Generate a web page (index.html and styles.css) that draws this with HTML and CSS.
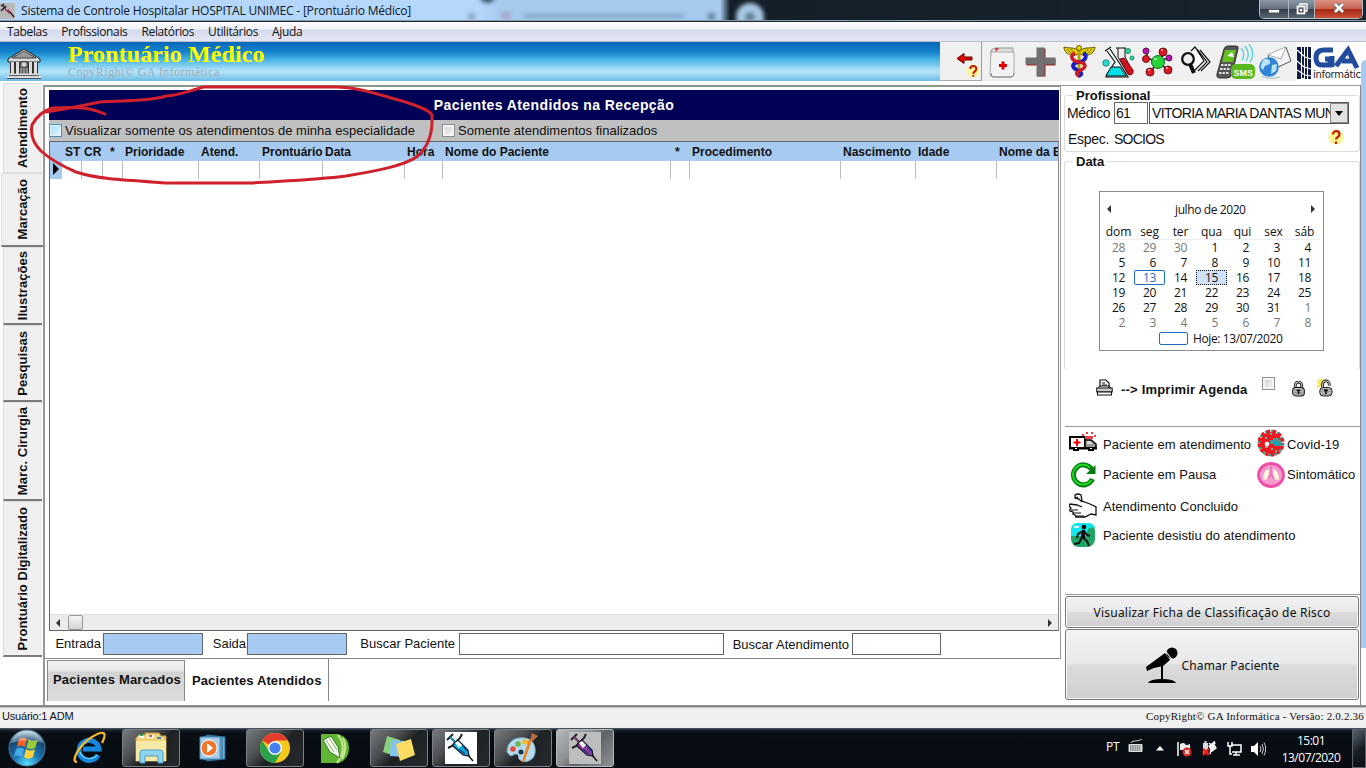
FILE: index.html
```
<!DOCTYPE html>
<html lang="pt-BR">
<head>
<meta charset="utf-8">
<title>Prontuário Médico</title>
<link rel="stylesheet" href="styles.css">
</head>
<body>
<svg width="0" height="0" class="defs" aria-hidden="true">
  <defs>
    <symbol id="syringe" viewBox="0 0 32 32">
      <path d="M2 8l6-6M5 5l7 7M3 16l4-2 8-8 2-4" stroke="#222" stroke-width="2" fill="none"/>
      <path d="M5 5l6 6" stroke="currentColor" stroke-width="1.500"/>
      <path d="M9 11l4-3 10 10 1 6-6-1L8 14z" fill="currentColor" stroke="#15152c" stroke-width="1.200"/>
      <path d="M10 11l3-2 4 4-3 3z" fill="#fff"/>
      <path d="M14 17l6 5M18 14l4 5" stroke="#1c3a9a" stroke-width="1.300"/>
      <path d="M23 23l5 6" stroke="#111" stroke-width="1.400"/>
    </symbol>
    <symbol id="padlock" viewBox="0 0 14 17">
      <path d="M3.500 8V4.500a3.500 3.500 0 0 1 7 0V8" fill="none" stroke="#111" stroke-width="3"/>
      <path d="M3.500 8V4.500a3.500 3.500 0 0 1 7 0V8" fill="none" stroke="#ccc" stroke-width="1.200"/>
      <rect x=".7" y="7" width="12.600" height="9" rx="3.500" fill="#c4c4c4" stroke="#111" stroke-width="1.100"/>
      <path d="M2 9.500h10M2 12h10M2 14h10" stroke="#666" stroke-width=".7"/>
      <path d="M5 10h4M7 10v4" stroke="#000" stroke-width="1.500"/>
    </symbol>
  </defs>
</svg>
<div class="desktop">
  <header class="titlebar">
    <svg class="app-icon" width="15" height="16" viewBox="0 0 15 16"><rect width="15" height="16" fill="#b9b9b9"/><path d="M1 3l3-2M2 2l4 4M1 8l5-5M5 5l5 4 4 5" stroke="#301820" stroke-width="1.400" fill="none"/><path d="M5 5l5 5" stroke="#903060" stroke-width="2.500"/><path d="M6 5l2 2" stroke="#fff"/></svg>
    <span class="title-text">Sistema de Controle Hospitalar HOSPITAL UNIMEC - [Prontuário Médico]</span>
    <div class="glass"><i class="blur-tab"></i><i class="blur-x first"></i><i class="blur-fav"></i><i class="blur-text"></i><i class="blur-x"></i><i class="blur-plus"></i></div>
    <div class="window-buttons">
      <span class="wb min"><svg width="12" height="5" viewBox="0 0 12 5"><rect x=".5" y=".5" width="11" height="3.500" fill="#fff" stroke="#555"/></svg></span>
      <span class="wb max"><svg width="12" height="12" viewBox="0 0 12 12"><path d="M4 3V1h7v7H9" fill="none" stroke="#fff" stroke-width="1.400"/><rect x="1.500" y="3.500" width="7" height="7" fill="#667" stroke="#fff" stroke-width="1.700"/><rect x="4" y="6" width="2" height="2" fill="#fff"/></svg></span>
      <span class="wb close"><svg width="12" height="10" viewBox="0 0 12 10"><path d="M2 1l8 8M10 1L2 9" stroke="#555" stroke-width="4"/><path d="M2 1l8 8M10 1L2 9" stroke="#fff" stroke-width="2.600"/></svg></span>
    </div>
  </header>
  <nav class="menu"><span>Tabelas</span><span>Profissionais</span><span>Relatórios</span><span>Utilitários</span><span>Ajuda</span></nav>
  <div class="toolbar">
    <div class="banner">
      <svg class="temple" width="34" height="31" viewBox="0 0 34 31"><path d="M1 11L17 1l16 10v3H1z" fill="#d8d8d8" stroke="#222"/><path d="M5 10l12-7 12 7z" fill="#999" stroke="#444"/><rect x="3" y="14" width="28" height="13" fill="#333"/><path d="M5.500 14v12M10.500 14v12M23.500 14v12M28.500 14v12" stroke="#ddd" stroke-width="3"/><rect x="13" y="13" width="8" height="13" fill="#555"/><path d="M15 15h4v3h-4zM14 20v6M17 20v6M20 20v6" fill="#ddd" stroke="#ccc"/><path d="M2 26.500h30M0 29h34" stroke="#ddd" stroke-width="2"/><path d="M0 30.500h34M2 27.600h30" stroke="#333" stroke-width=".8"/></svg>
      <div class="brand"><h1>Prontuário Médico</h1><p>CopyRight© GA Informática</p></div>
    </div>
    <div class="exit"><svg width="34" height="34" viewBox="0 0 34 34"><path d="M11 15.500l7-5v3.500h8v3h-8v3.500z" fill="#e60000" stroke="#600" stroke-width="1"/><circle cx="27" cy="28" r="6.500" fill="#fff69c"/><path d="M24.300 26c0-4 6-4 6 0 0 2.500-3 2.300-3 5M27.300 32v1.800" fill="none" stroke="#c41a10" stroke-width="2"/></svg></div>
    <div class="tools">
      <svg width="26" height="32" viewBox="0 0 26 32"><path d="M2 4l4-2h18v8H2z" fill="#ddd" stroke="#999"/><path d="M2 6h23v22q0 3-3 3H4q-3 0-3-3z" fill="#f2f2f2" stroke="#aaa"/><path d="M2 27q0 4 3 4h17q3 0 3-4" fill="none" stroke="#888"/><path d="M6 2h4l-3 4z" fill="#d33"/><path d="M14 15.500v8M10 19.500h8" stroke="#e00000" stroke-width="3"/></svg>
      <svg width="32" height="32" viewBox="0 0 32 32"><path d="M12.500 2.500h8v10h10v7h-10v11h-8v-11h-11v-7h11z" fill="#a02020"/><path d="M11.500 1.500h8v10h11v7h-11v12h-8v-12h-11v-7h11z" fill="#707070"/></svg>
      <svg width="34" height="34" viewBox="0 0 34 34"><path d="M16 7C12 1 6 4 1 2c0 4 3 7 7 8 3 1 6 0 8-2 2 2 5 3 9 2 4-1 7-4 7-8-5 2-11-1-16 5z" fill="#e6d200" stroke="#665b00"/><path d="M4 4l5 5M8 4l4 5M29 4l-5 5M25 4l-4 5" stroke="#776b00"/><path d="M16 3v29" stroke="#b49e00" stroke-width="3"/><path d="M20 8c5 2 3 8-4 9s-8 5-2 8 5 5 1 6" fill="none" stroke="#1820c0" stroke-width="4"/><path d="M12 8c-6 3-3 8 4 9s8 5 2 8-5 4-2 6" fill="none" stroke="#d01820" stroke-width="3.500"/><circle cx="16" cy="3" r="2.500" fill="#eee000" stroke="#665b00"/></svg>
      <svg width="34" height="34" viewBox="0 0 34 34"><path d="M14 3h10M16 3v9l10 17q5 1 4-4L23 12V3" fill="#eee" stroke="#111"/><path d="M18 14l9 16q5 0 4-5l-9-12z" fill="#e00c18" stroke="#701018"/><path d="M3 6l6-4M5 6l8 11L5 29l-1 3h22l-8-13L8 4" fill="#eff" stroke="#111" stroke-width="1.200"/><path d="M9 22h9l6 9H4z" fill="#00dfe8" stroke="#111"/><circle cx="26" cy="6" r="2.500" fill="#2ed9a2" stroke="#178866"/><circle cx="30" cy="13" r="2" fill="#2ed9a2" stroke="#178866"/><circle cx="4" cy="18" r="3.200" fill="#2ed9d2" stroke="#178886"/></svg>
      <svg width="34" height="34" viewBox="0 0 34 34"><path d="M6 4v9l12 4 6-10M29 12l-12 5 11 9M16 17l-6 10" stroke="#333" stroke-width="1.800" fill="none"/><circle cx="17" cy="17" r="6.500" fill="#25d33a" stroke="#107018"/><circle cx="5" cy="6" r="3" fill="#b815b0" stroke="#55104f"/><circle cx="22" cy="7" r="4" fill="#dc1822" stroke="#701018"/><circle cx="5" cy="14" r="3.500" fill="#dc1822" stroke="#701018"/><circle cx="28" cy="13" r="3" fill="#b815b0" stroke="#55104f"/><circle cx="9" cy="27" r="4" fill="#dc1822" stroke="#701018"/><circle cx="27" cy="25" r="4" fill="#dc1822" stroke="#701018"/><path d="M13 14h3M20 5h2M7 25h2M25 23h2" stroke="#fff"/></svg>
      <svg width="34" height="34" viewBox="0 0 34 34"><path d="M20 5l10 12-9 9M17 4l10 13-9 9M11 6l4-4 9 14-10 10" fill="#fff" stroke="#111" stroke-width="1.200"/><circle cx="8" cy="14" r="5.800" fill="#eee" stroke="#111" stroke-width="2.300"/><path d="M10 19l4 9" stroke="#111" stroke-width="4"/></svg>
      <svg width="40" height="36" viewBox="0 0 40 36"><path d="M8 5q1-3 4-3h8q3 0 2 3l-6 25q-1 4-5 4H4q-4 0-3-4z" fill="#555" stroke="#333"/><path d="M9 6h11l-3 12H6z" fill="#65bf1e"/><path d="M11 12l5-4 2 5z" fill="#fff"/><path d="M5 21h10M4 25h10M3 29h10" stroke="#ddd" stroke-width="2" stroke-dasharray="2.500 1"/><path d="M25 4q5 6 1 12M29 2q6 8 1 15M33 0q7 9 1 18" stroke="#5bd5dc" stroke-width="1.500" fill="none"/><rect x="15" y="20" width="24" height="15" rx="5" fill="#58b81d"/><text class="sms" x="17.500" y="31.500">SMS</text></svg>
      <svg width="34" height="34" viewBox="0 0 34 34"><path d="M10 10L28 2l5 14-19 9z" fill="#f3f3f8" stroke="#555"/><path d="M10 10l13 4 5-12" fill="#fff" stroke="#aaa"/><circle cx="11" cy="22" r="9.800" fill="#3184d6"/><path d="M5 15c4-3 8 0 7 3s-5 1-6 5-4 0-3-3M14 20l5-1-1 7-5 3z" fill="#b9e3f8"/><path d="M4 31q8 4 18 1" stroke="#9bb" stroke-width="1" fill="none"/></svg>
    </div>
    <div class="logo">
      <svg width="70" height="41" viewBox="0 0 70 41"><rect width="70" height="41" fill="#fff"/><path d="M1 5h4v32H1zM6 5h2v31H6zM9 5h2v32H9zM12 5h3v32h-3z" fill="#101a48"/><path d="M1 8l8 7 6 2M1 19l7 6 7 2M1 28l8 5 6 1" stroke="#fff" stroke-width="1.200" fill="none"/><path d="M37 8H28q-8 0-8 8t8 7h6v-6h-5M36 14v11" fill="none" stroke="#214b9d" stroke-width="5"/><path d="M40 24L52 8l9 18M46 19h12" fill="none" stroke="#214b9d" stroke-width="5"/><text class="logo-text" x="17" y="36">informátic</text></svg>
    </div>
  </div>

  <main class="work">
    <aside class="side-tabs">
      <span class="st h1t">Atendimento</span><span class="st h2t">Marcação</span><span class="st h3t">Ilustrações</span><span class="st h4t">Pesquisas</span><span class="st h5t">Marc. Cirurgia</span><span class="st h6t">Prontuário Digitalizado</span>
    </aside>
    <section class="patients">
      <div class="list-box">
        <h2>Pacientes Atendidos na Recepção</h2>
        <div class="filters">
          <label class="f1"><i class="check hot"></i>Visualizar somente os atendimentos de minha especialidade</label>
          <label><i class="check"></i>Somente atendimentos finalizados</label>
        </div>
        <div class="grid">
          <div class="row head"><span></span><span>ST</span><span>CR</span><span class="mid">*</span><span>Prioridade</span><span>Atend.</span><span>Prontuário</span><span>Data</span><span>Hora</span><span>Nome do Paciente</span><span class="star">*</span><span>Procedimento</span><span>Nascimento</span><span>Idade</span><span>Nome da E</span></div>
          <div class="row data"><span class="cursor"><svg width="6" height="12" viewBox="0 0 6 12"><path d="M0 0l6 6-6 6z"/></svg></span><span></span><span></span><span></span><span></span><span></span><span></span><span></span><span></span><span></span><span></span><span></span><span></span><span></span><span></span></div>
          <div class="empty"></div>
          <div class="hscroll"><i class="arrow prev"></i><i class="thumb"></i><i class="arrow next"></i></div>
        </div>
        <div class="search">
          <label class="s1">Entrada</label><i class="field blue"></i>
          <label class="s2">Saida</label><i class="field blue"></i>
          <label class="s3">Buscar Paciente</label><i class="field wide"></i>
          <label class="s4">Buscar Atendimento</label><i class="field short"></i>
        </div>
      </div>
      <div class="bottom-tabs"><span class="bt off">Pacientes Marcados</span><span class="bt on">Pacientes Atendidos</span></div>
    </section>
    <aside class="panel">
      <fieldset class="prof"><legend>Profissional</legend>
        <div class="line"><span class="lb">Médico</span><span class="num">61</span><span class="combo"><b>VITORIA MARIA DANTAS MUNIZ</b><i><svg width="8" height="5" viewBox="0 0 8 5"><path d="M0 0h8L4 5z"/></svg></i></span></div>
        <div class="line two"><span class="lb">Espec.</span><span class="spec">SOCIOS</span><svg class="help" width="16" height="18" viewBox="0 0 16 18"><circle cx="8" cy="9" r="7.500" fill="#fdf48c"/><path d="M5 6.500c0-4.500 6.500-4.500 6.500 0 0 2.500-3.500 2.500-3.500 5M8 13.500v2.500" fill="none" stroke="#c41a10" stroke-width="2.200"/></svg></div>
      </fieldset>
      <fieldset class="date"><legend>Data</legend>
        <div class="calendar">
          <div class="month"><i class="arrow prev"></i><span>julho de 2020</span><i class="arrow next"></i></div>
          <div class="week"><span>dom</span><span>seg</span><span>ter</span><span>qua</span><span>qui</span><span>sex</span><span>sáb</span></div>
          <div class="days"><span class="out">28</span><span class="out">29</span><span class="out">30</span><span>1</span><span>2</span><span>3</span><span>4</span><span>5</span><span>6</span><span>7</span><span>8</span><span>9</span><span>10</span><span>11</span><span>12</span><span class="today">13</span><span>14</span><span class="sel">15</span><span>16</span><span>17</span><span>18</span><span>19</span><span>20</span><span>21</span><span>22</span><span>23</span><span>24</span><span>25</span><span>26</span><span>27</span><span>28</span><span>29</span><span>30</span><span>31</span><span class="out">1</span><span class="out">2</span><span class="out">3</span><span class="out">4</span><span class="out">5</span><span class="out">6</span><span class="out">7</span><span class="out">8</span></div>
          <div class="hoje"><i></i><span>Hoje: 13/07/2020</span></div>
        </div>
      </fieldset>
      <div class="print">
        <svg width="17" height="17" viewBox="0 0 17 17"><path d="M4 8V1h6l3 3v5" fill="#fff" stroke="#111" stroke-width="1.200"/><path d="M6 4h3M6 6h5M2 9l2-2h9l2 2" stroke="#111" fill="none"/><rect x=".7" y="9" width="15.500" height="4" fill="#ccc" stroke="#111"/><rect x="1.500" y="13" width="14" height="3" fill="#fff" stroke="#111"/></svg>
        <b>--&gt; Imprimir Agenda</b><i class="check"></i>
        <svg class="lock1" width="13" height="16"><use href="#padlock"/></svg>
        <svg class="lock2" width="16" height="18" viewBox="0 0 17 19"><path d="M0 2l7 6M5 0l1 6M0 8l6-2M2 0l3 3" stroke="#f2e52c" stroke-width="2"/><path d="M6 9V5.500a3.500 3.500 0 0 1 7 0V7" fill="none" stroke="#111" stroke-width="3"/><path d="M6 9V5.500a3.500 3.500 0 0 1 7 0V7" fill="none" stroke="#ccc" stroke-width="1.200"/><rect x="3" y="9" width="13" height="9" rx="3.500" fill="#c4c4c4" stroke="#111"/><path d="M4 11h11M4 13.500h11M4 16h11" stroke="#666" stroke-width=".7"/><path d="M7.500 12h4M9.500 12v4" stroke="#000" stroke-width="1.600"/></svg>
      </div>
      <div class="legend">
        <div class="lg-row r1"><svg width="28" height="20" viewBox="0 0 28 20"><path d="M1 5h15v11H1z" fill="#fff" stroke="#000" stroke-width="2"/><path d="M16 8h6l5 4v4H16z" fill="#999" stroke="#000" stroke-width="1.500"/><path d="M18 9h3l3 3h-6z" fill="#ddd"/><path d="M8 7v7M4.500 10.500h7" stroke="#f00000" stroke-width="2"/><path d="M16 4h8v3h-8zM13 2h2v2h-2zM17 0h2v2h-2zM22 0h2v2h-2zM25 3h2v2h-2z" fill="#e8404a"/><path d="M0 15.500h28v2H0z"/><path d="M4 15h6v4H4zM19 15h6v4h-6z"/><path d="M6 16h2v1H6zM21 16h2v1h-2z" fill="#fff"/></svg><span>Paciente em atendimento</span>
          <svg class="c2" width="28" height="28" viewBox="0 0 28 28"><circle cx="14" cy="14" r="11.500" fill="none" stroke="#399984" stroke-width="3.600" stroke-dasharray="2.600 3.400"/><circle cx="14" cy="14" r="11.800" fill="none" stroke="#f01820" stroke-width="3.600" stroke-dasharray="3.400 2.600" stroke-dashoffset="3"/><circle cx="14" cy="14" r="10.700" fill="#f01820"/><path d="M8 9h2M13 5h2M8 18h3M18 22h2M14 20h2" stroke="#65b8a0" stroke-width="2"/><path d="M13 11h3V9h6v2h2v6h-7v-2h-4z" fill="#54928e"/><path d="M17 12h4v2h2v2h-5z" fill="#00a8c8"/><circle cx="10" cy="15" r="2.300" fill="#fff"/></svg><span>Covid-19</span></div>
        <div class="lg-row r2"><svg width="28" height="26" viewBox="0 0 28 26"><path d="M22.500 7A10 10 0 1 0 23.500 17" fill="none" stroke="#067b12" stroke-width="5"/><path d="M21 5.500A10 10 0 1 0 22.500 18" fill="none" stroke="#18df24" stroke-width="1.800"/><path d="M26.500 3v9H17z" fill="#067b12"/></svg><span>Paciente em Pausa</span>
          <svg class="c2" width="28" height="26" viewBox="0 0 28 26"><ellipse cx="14" cy="13" rx="12.500" ry="11.500" fill="#f39bd0" stroke="#ef4da6" stroke-width="2.800"/><path d="M12 7q-6 1-6 11l5-1 1-8zM16 7q6 1 6 11l-5-1-1-8z" fill="#fff4dc"/><path d="M14 4v8l-3 5M14 12l3 5" fill="none" stroke="#f070b8" stroke-width="1.500"/></svg><span>Sintomático</span></div>
        <div class="lg-row r3"><svg width="28" height="26" viewBox="0 0 28 26"><path d="M13 9L10 6 6 5V2q3-2 6 0l1 6 8 3 6 3v8l-5-1-6 3H7l-1-2-2-1v-2l-3-1v-2l1-1-2-2 1-2 7 1 5 2" fill="#fff" stroke="#111" stroke-width="1.300"/><path d="M1 17h8M4 20h8M7 23h8M9 4l-3 1" fill="none" stroke="#111" stroke-width="1.200"/></svg><span>Atendimento Concluido</span></div>
        <div class="lg-row r4"><svg width="26" height="26" viewBox="0 0 26 26"><rect x="1" y="1" width="24" height="24" rx="8" fill="#21a467"/><path d="M1 14V8q0-7 7-7h9q7 0 8 5-7-2-8 4v4z" fill="#10e8f0"/><path d="M4 4h5v2H4z" fill="#d8ffff"/><circle cx="14" cy="5" r="2.300"/><path d="M13 8l-1 7 5 4 2 5M12 15l-3 6-5 1M13 9l-5 3-1 4M14 9l3 4 3 1" fill="none" stroke="#061410" stroke-width="2"/><path d="M12 8h3v8h-4z"/></svg><span>Paciente desistiu do atendimento</span></div>
      </div>
      <button class="btn ficha">Visualizar Ficha de Classificação de Risco</button>
      <button class="btn chamar"><svg width="34" height="38" viewBox="0 0 34 38"><circle cx="27" cy="7" r="5.500"/><path d="M20 7l5 7-7 6-9 2-7 3-1-4z"/><path d="M20.500 5l7 9" stroke="#ddd" stroke-width="1.200"/><path d="M17 18v16" stroke="#000" stroke-width="2"/><path d="M3 37q2-4 14-4t14 4z"/></svg><span>Chamar Paciente</span></button>
    </aside>
    <div class="edge"><i></i></div>
  </main>
  <div class="status"><span>Usuário:1 ADM</span><span class="copy">CopyRight© GA Informática - Versão: 2.0.2.36</span></div>
  <footer class="taskbar">
    <div class="task orb"><svg width="38" height="38" viewBox="0 0 38 38"><defs><radialGradient id="og" cx=".5" cy=".95" r=".9"><stop offset="0" stop-color="#58e0ff"/><stop offset=".4" stop-color="#1b78b8"/><stop offset=".8" stop-color="#13456f"/><stop offset="1" stop-color="#a8c8dc"/></radialGradient></defs><circle cx="19" cy="19" r="18" fill="url(#og)" stroke="#547a94"/><path d="M11 10q4-3 8 0l-2 8q-4-3-8 0z" fill="#f0642a"/><path d="M20.500 10.500q5 3 9 0l-2 8q-5 3-9 0z" fill="#9acb35"/><path d="M8 20q4-3 8 0l-2 8q-4-3-8 0z" fill="#45a9e4"/><path d="M18 20q5 3 9 0l-2 8q-5 3-9 0z" fill="#fdd03a"/><path d="M3 14Q8 2 19 2t16 12Q19 9 3 14z" fill="#fff" opacity=".3"/></svg></div>
    <div class="task ie"><svg width="34" height="34" viewBox="0 0 34 34"><path d="M26 24a10 10 0 1 1 1-6H11" fill="none" stroke="#1687dc" stroke-width="5"/><path d="M25 24a10 10 0 0 1-17-3" fill="none" stroke="#64d1ff" stroke-width="1.500"/><path d="M5 31C-2 31 7 14 20 6S35 2 30 12" fill="none" stroke="#f5b92c" stroke-width="2.300"/></svg></div>
    <div class="task open"><svg width="34" height="32" viewBox="0 0 34 32"><path d="M2 6l3-3h6v-2h14l2 3h5v25H2z" fill="#efd27a" stroke="#bd9944"/><path d="M5 3h5v3H5zM13 3h7v3h-7z" fill="#fff"/><path d="M6 2h3v2H6z" fill="#2a9b48"/><path d="M15 3h3v2h-3z" fill="#e05535"/><path d="M23 5h4v2h-4z" fill="#3684ba"/><path d="M2 9h30v20H2z" fill="#f8e8a6"/><path d="M6 31V21q0-3 3-3h17q3 0 3 3v10h-5v-7H11v7z" fill="#8dd5ee" stroke="#4f9dc0"/></svg></div>
    <div class="task"><svg width="28" height="28" viewBox="0 0 28 28"><path d="M8 1l18 2v22L8 27zM5 2l18 1v22L5 26z" fill="#71add3" stroke="#246a99"/><path d="M1 3h20v22H1z" fill="#a7cfe7" stroke="#4c88ae"/><circle cx="10" cy="14" r="8" fill="#f0752b" stroke="#fff"/><path d="M8 9l6 5-6 5z" fill="#fff"/></svg></div>
    <div class="task open"><svg width="32" height="32" viewBox="0 0 32 32"><circle cx="16" cy="16" r="15" fill="#f8c91c"/><path d="M16 16L3 8.500A15 15 0 0 1 29 8.500H16z" fill="#e33b2e"/><path d="M3 8.500A15 15 0 0 0 16 31l6-11-6-4-6 3z" fill="#2ba24c"/><circle cx="16" cy="16" r="7" fill="#fff"/><circle cx="16" cy="16" r="5.600" fill="#427ff0"/></svg></div>
    <div class="task corel"><svg width="30" height="32" viewBox="0 0 30 32"><path d="M1 2h17q11 3 11 14T19 31H1z" fill="#62b535"/><path d="M18 3q10 13-1 28M23 6q5 10-1 21" stroke="#c8e694" stroke-width="2" fill="none"/><path d="M3 8l8-4 7 11 2 11-10-6z" fill="#fff" stroke="#347d1d"/><path d="M6 8l8 12M9 6l8 12" stroke="#79b351"/></svg></div>
    <div class="task open"><svg width="34" height="28" viewBox="0 0 34 28"><path d="M5 2l13 4-5 16L1 18z" fill="#86d27d"/><path d="M9 6l14 1-1 16-14-1z" fill="#86c3ef"/><path d="M14 10l15-5 4 16-15 6z" fill="#fbdc63"/></svg></div>
    <div class="task open"><span class="tile white"><svg width="32" height="32"><use href="#syringe"/></svg></span></div>
    <div class="task open"><svg width="34" height="32" viewBox="0 0 34 32"><path d="M1 20C1 8 11 5 19 6s11 8 10 15-9 11-15 7c-3-2 0-6-4-6s-4 5-9-2z" fill="#b6d9ec" stroke="#7eabc6"/><circle cx="7" cy="17" r="2.800" fill="#e34b3d"/><circle cx="12" cy="12" r="2.800" fill="#65b84b"/><circle cx="19" cy="10" r="2.800" fill="#efb934"/><circle cx="15" cy="20" r="2.500" fill="#18334b"/><path d="M26 8l-7 20-3 3 1-5 6-19z" fill="#e98524"/><path d="M24 8l2-7 6 3-5 5z" fill="#b96c40"/></svg></div>
    <div class="task open active"><span class="tile grey"><svg width="32" height="32"><use href="#syringe"/></svg></span></div>
    <div class="tray">
      <span class="lang">PT</span>
      <svg class="kb" width="15" height="14" viewBox="0 0 15 14"><path d="M3 4q0-2 4-2t7-2" fill="none" stroke="#ccc"/><rect x=".5" y="5" width="14" height="8" rx="1" fill="#ddd"/><path d="M2 7h11M2 9h11M2 11h11" stroke="#444" stroke-dasharray="1.500 .7"/></svg>
      <svg class="up" width="8" height="5" viewBox="0 0 8 5"><path d="M0 4.500L4 0l4 4.500z" fill="#fff"/></svg>
      <svg class="flag" width="15" height="15" viewBox="0 0 15 15"><path d="M1 0v14" stroke="#fff" stroke-width="1.500"/><path d="M3 2q4-2 5 0t5 0v6H3z" fill="#eee"/><circle cx="10" cy="10" r="4.600" fill="#d42a20"/><path d="M8 8l4 4M12 8l-4 4" stroke="#fff" stroke-width="1.400"/></svg>
      <svg class="plug" width="15" height="15" viewBox="0 0 15 15"><path d="M1 2h5v11H1zM2.500 0h2v2h-2z" fill="#ddd"/><path d="M7 5l4-3 3 5-4 3zM7 2l2 2M12 0l1 3M9 9l-1 4" fill="#eee" stroke="#fff" stroke-width="1.400"/><path d="M1 8l6 6M7 8l-6 6" stroke="#e02018" stroke-width="2.500"/></svg>
      <svg class="net" width="15" height="14" viewBox="0 0 15 14"><path d="M4 3h10v7H5M9 10v3M6 13h7M1 0v4h4V0M3 4v8h2" fill="none" stroke="#fff" stroke-width="1.500"/></svg>
      <svg class="vol" width="15" height="14" viewBox="0 0 15 14"><path d="M0 4h3l4-4v14l-4-4H0z" fill="#fff"/><path d="M9 4q2 3 0 6M11 2q3 5 0 10M13 .5q3.500 6.500 0 13" fill="none" stroke="#ccc"/></svg>
      <div class="clock"><span>15:01</span><span>13/07/2020</span></div>
      <i class="peek"></i>
    </div>
  </footer>
  <svg class="mark" width="410" height="104" viewBox="0 0 410 104"><path d="M79 30C70 26 60 22 27 24C18 26 10 33 6 41C4 52 8 60 15 67C24 75 36 82 50 88C72 95 95 96 140 99H225C255 97 290 96 320 92C350 87 378 82 392 72C401 63 407 52 406 31C404 26 385 19 365 14C340 6 325 3 310 3H178C165 6 155 11 140 12C122 18 95 16 74 18C56 22 40 25 20 28" /></svg>
</div>
</body>
</html>
```
FILE: styles.css
```
*{box-sizing:border-box}
body{margin:0;background:#fff;color:#111;font:13px "Liberation Sans",Arial,sans-serif;overflow:hidden}
i{font-style:normal}
svg{display:block;flex:none}
.defs{position:absolute}
.desktop{position:relative;width:1366px;height:768px;display:flex;flex-direction:column;overflow:hidden}
/* title bar */
.titlebar{position:relative;height:22px;display:flex;align-items:flex-start;background:linear-gradient(90deg,#b5d7fb 0,#b5d7fb 480px,#a5caee 500px,#a5caee 720px,#141f28 730px,#17232d 1366px);border-bottom:1px solid #1b2733;flex:none}
.titlebar::after{content:"";position:absolute;left:0;right:0;bottom:0;height:1px;background:#8d9aa5}
.app-icon{margin-top:3px}
.title-text{margin:1px 0 0 6px;font:12px/20px "Open Sans","Noto Sans",sans-serif;letter-spacing:-.203px;white-space:nowrap;color:#0c1822}
.glass{position:absolute;inset:0;overflow:hidden}
.glass i{position:absolute;filter:blur(2px)}
.blur-tab{left:480px;top:-9px;width:15px;height:12px;background:#39536b;border-radius:50%}
.blur-fav{left:501px;top:11px;width:10px;height:9px;background:#ad91b7;border-radius:50%;opacity:.6}
.blur-text{left:524px;top:14px;width:160px;height:4px;background:#6c8dab;opacity:.6}
.blur-x{left:708px;top:13px;width:7px;height:7px;background:#49657f;opacity:.7}
.blur-x.first{left:468px;opacity:.4}
.blur-plus{left:736px;top:3px;width:28px;height:28px;border-radius:50%;background:radial-gradient(circle,#5b7890 3px,#a8c8e4 6px)}
.window-buttons{position:absolute;right:3px;top:0;width:104px;height:19px;display:flex;border:1px solid #b4bcc4;border-top:0;border-radius:0 0 5px 5px;overflow:hidden}
.wb{height:18px;display:flex;align-items:center;justify-content:center;background:linear-gradient(#8b98a5,#65717d 48%,#333f4a 52%,#586470);border-right:1px solid #adb4bb;width:29px}
.wb.min{padding-top:4px}.wb.max{width:27px}
.wb.close{width:47px;background:linear-gradient(#dd9183,#c76350 48%,#a82814 52%,#cb5138);border:0;padding-bottom:2px}
.menu{height:20px;flex:none;display:flex;gap:14px;padding-left:7px;background:linear-gradient(#fff,#eef1f9 7px,#d5dbed 8px,#e1e5f4 18px);border-bottom:1px solid #bbc0cf;font:12px/19px "Open Sans","Noto Sans",sans-serif;letter-spacing:-.36px}
/* toolbar */
.toolbar{display:flex;height:40px;flex:none;background:#f0f0f0;border-bottom:1px solid #fff}
.banner{width:940px;display:flex;background:linear-gradient(#0868b8,#1583cc 10px,#4bb6e6 18px,#a2dcf5 27px,#b4e4f7 30px,#73c0e9 38px)}
.temple{margin:6px 0 0 7px}
.brand{margin-left:27px;color:#ff0}
h1{margin:0;height:24px;font:bold 24px/24px "Liberation Serif",serif;letter-spacing:.1px}
.brand p{margin:-1px 0 0;font:12px/14px "Liberation Serif",serif;letter-spacing:.45px;color:#a0adb6}
.exit{width:42px;border-right:1px solid #999;border-bottom:1px solid #aaa;padding:1px 0 0 6px}
.tools{width:314px;display:flex;align-items:center;padding-left:7px}
.tools svg:nth-child(2){margin-left:10px}
.tools svg:nth-child(3){margin-left:6px}
.tools svg:nth-child(4){margin-left:5px}
.tools svg:nth-child(5){margin-left:5px}
.tools svg:nth-child(6){margin-left:5px}
.tools svg:nth-child(7){margin-left:2px}
.tools svg:nth-child(8){margin-left:2px}
.sms{font:bold 9px "Liberation Sans",sans-serif;fill:#fff}
.logo{width:70px;overflow:hidden}
.logo-text{font:10px "DejaVu Sans",sans-serif;fill:#222;letter-spacing:-.3px}
/* work area */
.work{height:625px;flex:none;display:flex;background:#fff;border-bottom:2px solid #888}
.side-tabs{width:43px;padding-top:1px;flex:none;display:flex;flex-direction:column}
.st{margin-left:3px;width:39px;flex:none;background:#f0f0f0;border:1px solid #ddd;border-bottom:2px solid #7b7b7b;border-right:0;writing-mode:sideways-lr;letter-spacing:.05px;font-weight:bold;line-height:36px;white-space:nowrap;display:flex;align-items:center;justify-content:center}
.h1t{height:90px;border-bottom:1px solid #ddd}
.h2t{height:74px;margin-left:1px;width:42px}
.h3t{height:78px}.h4t{height:77px}.h5t{height:99px}.h6t{height:156px}
.patients{width:1018px;flex:none;display:flex;flex-direction:column;border-left:2px solid #969696;margin-top:3px;border-top:2px solid #8c948c;height:620px}
.list-box{height:572px;padding:3px 0 0 4px;border-bottom:1px solid #888;border-right:1px solid #999}
h2{margin:0;height:30px;width:1010px;background:#000054;color:#fff;text-align:center;font:bold 14px/30px "Liberation Sans",sans-serif;letter-spacing:.42px}
.filters{display:flex;width:1010px;height:21px;background:#c0c0c0;line-height:21px}
.filters label{display:flex;align-items:center;letter-spacing:.02px}
.f1{width:393px}
.check{width:13px;height:13px;border:1px solid #8f8f8f;background:linear-gradient(135deg,#ccc,#f8f8f8);box-shadow:inset 0 0 0 2px #f5f5f5;margin-right:3px;display:block}
.check.hot{border-color:#4a93b8;background:linear-gradient(135deg,#a8def6,#e4f6ff);box-shadow:inset 0 0 0 1px #dff4fd}
.grid{width:1010px;height:490px;border:1px solid #666;border-right:1px solid #888;display:flex;flex-direction:column;overflow:hidden}
.row{display:grid;grid-template-columns:13px 19px 21px 20px 76px 61px 63px 82px 38px 228px 19px 151px 75px 81px 61px;flex:none}
.head{height:19px;background:#a6caf0;font:bold 12px/20px "Liberation Sans",sans-serif;white-space:nowrap}
.head span{padding-left:2px}
.head .mid{padding-left:7px}.head .star{padding-left:4px}
.data{height:18px}
.data span{border-right:1px solid #bcbcbc}
.data span:last-child{border:0}
.data .cursor{background:#a6caf0;border-right:1px solid #fff;padding:2px 0 0 3px}
.empty{flex:1}
.hscroll{height:16px;background:#ececec;border-top:1px solid #e0e0e0;display:flex;align-items:center;padding:0 6px}
.arrow{width:0;height:0;border:4px solid transparent}
.arrow.prev{border-right-color:#333;border-left:0}
.arrow.next{border-left-color:#333;border-right:0;margin-left:auto}
.thumb{width:15px;height:15px;border:1px solid #999;border-radius:2px;background:linear-gradient(#f5f5f5,#d4d4d4);margin-left:8px}
.search{display:flex;padding-top:2px;line-height:22px;white-space:nowrap}
.search label{text-align:right;padding-right:2px}
.field{height:22px;border:1px solid #646464;background:#fff}
.field.blue{width:100px;background:#a6caf0}
.search .s1{width:54px}.search .s2{width:44px;padding-right:1px}.search .s3{width:112px;padding-right:4px}.search .s4{width:128px;padding:1px 3px 0 0}
.wide{width:265px}.short{width:89px}
.bottom-tabs{display:flex;height:43px;padding-left:2px;font-weight:bold}
.bt{height:42px;border-right:1px solid #888;white-space:nowrap}
.bt.off{margin-top:1px;width:138px;height:41px;border:1px solid #888;border-bottom:0;background:linear-gradient(#f2f2f2,#e8e8e8 10px,#d2d2d2 11px,#dcdcdc);line-height:38px;padding-left:5px;letter-spacing:.16px}
.bt.on{width:144px;line-height:44px;padding-left:7px;letter-spacing:.11px}
/* professional, calendar and legend panel */
.panel{width:300px;flex:none;margin-top:3px;height:620px;border-top:1px solid #999;border-right:1px solid #888;padding-left:3px;display:flex;flex-direction:column}
.panel fieldset{margin:0;border:1px solid #dcdcdc;border-radius:3px;padding:0;min-width:0;flex:none}
legend{font:bold 13px/15px "Liberation Sans",sans-serif;margin-left:8px;padding:0 3px;height:15px}
.panel .prof{margin-top:2px;height:64px}
.line{display:flex;height:22px;align-items:center;padding-left:3px;margin-top:-1px;white-space:nowrap}
.lb{width:46px;font-size:14px;letter-spacing:-.3px;margin-left:-1px;margin-right:1px}
.two .lb{margin:0}
.num{width:34px;height:22px;border:1px solid #666;padding-left:1px;font:14px/20px "Liberation Sans",sans-serif;letter-spacing:-.7px}
.combo{width:200px;height:22px;margin-left:1px;display:flex;border:1px solid #555}
.combo b{flex:1;overflow:hidden;padding-left:2px;font:14px/20px "Liberation Sans",sans-serif;letter-spacing:-.65px}
.combo i{width:18px;border:1px solid #888;background:#e2e2e2;display:flex;align-items:center;justify-content:center}
.line.two{margin-top:2px;height:25px}
.spec{font-size:14px;letter-spacing:-.75px}
.help{margin:-4px 15px 0 auto}
.panel .date{margin-top:2px;height:216px;border-bottom:0}
.calendar{margin:22px 0 0 34px;width:225px;height:160px;border:1px solid #8b8b8b;font:12px/15px "Open Sans","Noto Sans",sans-serif;letter-spacing:-.4px;padding:10px 3px 0}
.month{display:flex;height:16px;line-height:16px;padding:0 5px 0 4px;white-space:nowrap}
.month span{margin-left:64px}
.month .arrow{margin-top:3px}
.week{display:grid;grid-template-columns:repeat(7,31px);text-align:center;padding-top:6px;height:22px;border-bottom:1px solid #eee;line-height:15px;letter-spacing:-.1px}
.days{display:grid;grid-template-columns:repeat(7,31px);grid-auto-rows:15px;text-align:right;line-height:15px}
.days span{padding-right:9px}
.days .out{color:#777}
.days .today{border:1px solid #1c6fc0;border-radius:2px;color:#1c6fc0;padding-right:8px;line-height:13px}
.days .sel{background:#cfe2fa;border:1px dotted #111;padding-right:8px;line-height:13px}
.hoje{display:flex;align-items:center;height:17px;padding-left:56px;white-space:nowrap}
.hoje i{width:29px;height:13px;border:1px solid #1c6fc0;border-radius:2px;margin-right:5px}
.print{height:57px;flex:none;border-bottom:1px solid #999;margin-left:1px;display:flex;padding:9px 0 0 31px}
.print b{margin:3px 0 0 8px;letter-spacing:.2px;width:141px;white-space:nowrap}
.print .check{margin:-2px 0 0 0}
.lock1{margin:2px 0 0 17px}.lock2{margin:0 0 0 12px}
.legend{height:168px;flex:none;margin-left:1px;padding-left:4px;border-bottom:1px solid #999;white-space:nowrap}
.lg-row{display:flex;align-items:center;height:30px}
.lg-row span{margin-left:6px;width:154px;letter-spacing:.03px}
.lg-row .c2{margin:0}.lg-row .c2+span{width:70px;margin-left:2px}
.r1{height:34px}.r1 svg:first-child{margin-top:-4px}.r2{height:27px}.r3{height:34px;padding-top:2px}.r4{height:26px;padding-left:1px}.r4 span{margin-left:7px}
.r1 .c2{margin-top:-3px}
.btn{margin:1px 1px 0;width:294px;flex:none;border:1px solid #777;border-radius:3px;box-shadow:inset 0 0 0 1px #f7f7f7;background:linear-gradient(#f2f2f2,#e9e9e9 49%,#dcdcdc 51%,#cfcfcf);color:#111;font:12px "Noto Sans",sans-serif;padding:0}
.ficha{height:32px;letter-spacing:.22px}
.chamar{height:71px;display:flex;align-items:center;justify-content:center;gap:3px;letter-spacing:.14px}
.chamar span{margin-top:2px}
.edge{flex:1;background:#fff}
.edge i{display:block;margin:-22px 0 0;height:588px;background:#a6caf0;border-radius:5px 0 0 0;position:relative}
.status{height:21px;flex:none;background:#f0f0f0;border-top:1px solid #bbb;border-bottom:1px solid #eee;display:flex;justify-content:space-between;padding:0 2px;font:11px/16px "Liberation Sans",sans-serif;letter-spacing:-.2px}
.copy{font:11px/17px "Liberation Serif",serif;letter-spacing:.2px}
/* taskbar */
.taskbar{height:40px;flex:none;display:flex;background:linear-gradient(#55606b,#1a222c 2px,#090d14 5px,#070b12);padding:1px 0 0 0}
.task{width:58px;height:38px;margin-right:4px;display:flex;align-items:center;justify-content:center;border:1px solid transparent;border-radius:3px;flex:none}
.task.orb{width:56px;padding-right:2px}
.open{background:linear-gradient(135deg,#767a7d,#4a4e51 35%,#1e2225 55%,#26292c);border-color:#7c8084}
.active{background:linear-gradient(135deg,#b4b8ba,#8b8f92 40%,#5e6265 55%,#8f9395);border-color:#b5b9bc}
.corel{padding-right:4px}
.tile{width:32px;height:32px}
.white{background:#fff;color:#0cb0d0}.grey{background:#bdbdbd;color:#923a91}
.tray{margin-left:auto;display:flex;width:260px;color:#fff;font:12px "Open Sans",sans-serif;height:39px;flex:none}
.lang{width:22px;padding-top:9px;letter-spacing:-.3px}
.kb{margin-top:10px}.up{margin:17px 0 0 13px}
.flag{margin:13px 0 0 13px}.plug{margin:12px 0 0 10px}.net{margin:13px 0 0 10px}.vol{margin:13px 0 0 9px}
.clock{display:flex;flex-direction:column;align-items:center;margin-left:15px;width:60px;letter-spacing:-.5px;line-height:17px;padding-top:3px}
.peek{margin-left:auto;width:14px;height:39px;border:1px solid #59616a;background:linear-gradient(135deg,#5b646d,#171d25 55%,#0a0e14)}
.mark{position:absolute;left:26px;top:84px;pointer-events:none}
.mark path{fill:none;stroke:#cf202b;stroke-width:3;stroke-linejoin:round;stroke-linecap:round}
```
